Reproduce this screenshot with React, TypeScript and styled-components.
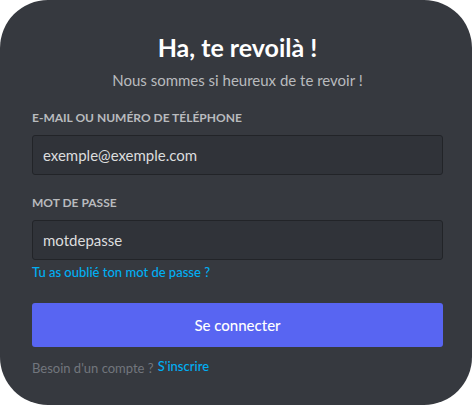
import React from "react";
import styled, { createGlobalStyle } from "styled-components";

const Global = createGlobalStyle`
  html, body { margin: 0; padding: 0; background: #ffffff; }
  body { font-family: "Lato", "Noto Sans", sans-serif; }
  * { box-sizing: border-box; }
`;

const Card = styled.form`
  width: 472px;
  height: 405px;
  background: #36393f;
  border-radius: 48px;
  padding: 32px 29px 0 32px;
  display: flex;
  flex-direction: column;
`;

const Title = styled.h1`
  margin: 0;
  text-align: center;
  color: #ffffff;
  font-size: 25px;
  line-height: 30px;
  font-weight: 700;
`;

const Subtitle = styled.p`
  margin: 8px 0 0;
  text-align: center;
  color: #b9bbbe;
  font-size: 15px;
  line-height: 20px;
  font-weight: 400;
`;

const Field = styled.div<{ $top: number }>`
  margin-top: ${(p) => p.$top}px;
  display: flex;
  flex-direction: column;
`;

const Label = styled.label`
  color: #b9bbbe;
  font-size: 12px;
  line-height: 16px;
  font-weight: 700;
  text-transform: uppercase;
  margin-bottom: 9px;
`;

const Input = styled.input`
  height: 40px;
  width: 100%;
  background: #303339;
  border: 1px solid #222428;
  border-radius: 3px;
  padding: 0 10px;
  color: #dcddde;
  font-family: inherit;
  font-size: 15px;
  outline: none;
`;

const Link = styled.a`
  color: #00aff4;
  text-decoration: none;
  font-size: 13px;
  line-height: 16px;
  font-weight: 500;
  cursor: pointer;
`;

const Forgot = styled(Link)`
  margin-top: 4px;
  align-self: flex-start;
`;

const Button = styled.button`
  margin-top: 23px;
  height: 44px;
  width: 100%;
  border: none;
  border-radius: 3px;
  background: #5865f2;
  color: #ffffff;
  font-family: inherit;
  font-size: 15px;
  font-weight: 500;
  cursor: pointer;
`;

const Register = styled.div`
  margin-top: 11px;
  font-size: 13px;
  line-height: 20px;
  color: #72767d;
  display: flex;
  gap: 4px;
`;

export default function App() {
  return (
    <>
      <Global />
      <Card onSubmit={(e) => e.preventDefault()}>
        <Title>Ha, te revoilà !</Title>
        <Subtitle>Nous sommes si heureux de te revoir !</Subtitle>
        <Field $top={20}>
          <Label>E-mail ou numéro de téléphone</Label>
          <Input defaultValue="exemple@exemple.com" />
        </Field>
        <Field $top={20}>
          <Label>Mot de passe</Label>
          <Input defaultValue="motdepasse" />
        </Field>
        <Forgot>Tu as oublié ton mot de passe ?</Forgot>
        <Button type="submit">Se connecter</Button>
        <Register>
          <span>Besoin d'un compte ?</span>
          <Link>S'inscrire</Link>
        </Register>
      </Card>
    </>
  );
}
